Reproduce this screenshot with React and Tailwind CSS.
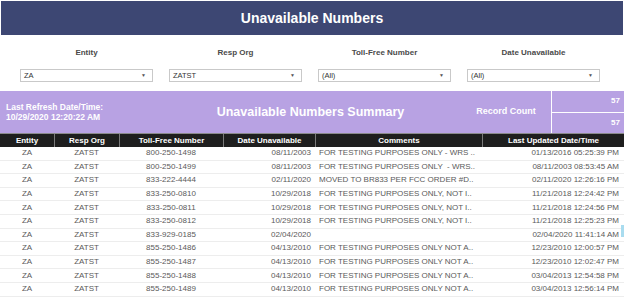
import React from 'react';

const filters = [
    { label: 'Entity', value: 'ZA' },
    { label: 'Resp Org', value: 'ZATST' },
    { label: 'Toll-Free Number', value: '(All)' },
    { label: 'Date Unavailable', value: '(All)' },
];

const columns = ['Entity', 'Resp Org', 'Toll-Free Number', 'Date Unavailable', 'Comments', 'Last Updated Date/Time'];

const rows = [
    ['ZA', 'ZATST', '800-250-1498', '08/11/2003', 'FOR TESTING PURPOSES ONLY - WRS ..', '01/13/2016 05:25:39 PM'],
    ['ZA', 'ZATST', '800-250-1499', '08/11/2003', 'FOR TESTING PURPOSES ONLY  - WRS..', '08/11/2003 08:53:45 AM'],
    ['ZA', 'ZATST', '833-222-4444', '02/11/2020', 'MOVED TO BR833 PER FCC ORDER #D..', '02/11/2020 12:26:16 PM'],
    ['ZA', 'ZATST', '833-250-0810', '10/29/2018', 'FOR TESTING PURPOSES ONLY, NOT I..', '11/21/2018 12:24:42 PM'],
    ['ZA', 'ZATST', '833-250-0811', '10/29/2018', 'FOR TESTING PURPOSES ONLY, NOT I..', '11/21/2018 12:24:56 PM'],
    ['ZA', 'ZATST', '833-250-0812', '10/29/2018', 'FOR TESTING PURPOSES ONLY, NOT I..', '11/21/2018 12:25:23 PM'],
    ['ZA', 'ZATST', '833-929-0185', '02/04/2020', '', '02/04/2020 11:41:14 AM'],
    ['ZA', 'ZATST', '855-250-1486', '04/13/2010', 'FOR TESTING PURPOSES ONLY NOT A..', '12/23/2010 12:00:57 PM'],
    ['ZA', 'ZATST', '855-250-1487', '04/13/2010', 'FOR TESTING PURPOSES ONLY NOT A..', '12/23/2010 12:02:47 PM'],
    ['ZA', 'ZATST', '855-250-1488', '04/13/2010', 'FOR TESTING PURPOSES ONLY NOT A..', '03/04/2013 12:54:58 PM'],
    ['ZA', 'ZATST', '855-250-1489', '04/13/2010', 'FOR TESTING PURPOSES ONLY NOT A..', '03/04/2013 12:56:14 PM'],
];

const cellAlign = [
    'justify-center',
    'justify-center',
    'justify-center',
    'justify-end pr-[4px]',
    'justify-start pl-[4px]',
    'justify-end pr-[5px]',
];

const App = () => {
    return (
        <div className="w-[624px] h-[297px] bg-white overflow-hidden relative font-['Liberation_Sans',Arial,sans-serif]">
            {/* title bar */}
            <div className="mx-[1px] mt-[1px] h-[34px] bg-[#3d4773] flex items-center justify-center">
                <h1 className="text-white font-bold text-[14px]">Unavailable Numbers</h1>
            </div>

            {/* filters */}
            <div className="h-[56px] pl-[20px] pt-[13px] grid grid-cols-[133px_133px_133px_133px] gap-x-[16px]">
                {filters.map(f => (
                    <div key={f.label} className="flex flex-col items-center">
                        <span className="text-[8px] leading-[10px] font-bold text-[#4a4a4a]">{f.label}</span>
                        <div className="mt-[11px] w-full h-[13px] border border-[#c9c9c9] flex items-center justify-between pl-[3px] pr-[6px]">
                            <span className="text-[7.5px] text-[#333]">{f.value}</span>
                            <span className="text-[5px] text-[#555]">▼</span>
                        </div>
                    </div>
                ))}
            </div>

            {/* summary band */}
            <div className="h-[42px] bg-[#b8a2e3] flex text-white font-bold">
                <div className="w-[160px] pl-[6px] flex flex-col justify-center text-[8.5px] leading-[10px]">
                    <span>Last Refresh Date/Time:</span>
                    <span>10/29/2020 12:20:22 AM</span>
                </div>
                <div className="flex-1 flex items-center justify-center text-[12.5px]">Unavailable Numbers Summary</div>
                <div className="w-[90px] flex items-center justify-center text-[9px]">Record Count</div>
                <div className="w-[73px] border-l border-white flex flex-col text-[8px]">
                    <div className="flex-1 border-b border-white flex items-center justify-end pr-[4px]">57</div>
                    <div className="flex-1 flex items-center justify-end pr-[4px]">57</div>
                </div>
            </div>

            {/* table */}
            <div className="relative">
                <div className="grid grid-cols-[54px_65px_104px_92px_167px_142px] h-[14px] bg-[#1e1e1e] border-t border-[#8a8a8a]">
                    {columns.map((c, i) => (
                        <div key={c} className={`flex items-center justify-center text-white font-bold text-[8px] ${i > 0 ? 'border-l border-[#7a7a7a]' : ''}`}>
                            {c}
                        </div>
                    ))}
                </div>
                {rows.map((r, ri) => (
                    <div key={ri} className="grid grid-cols-[54px_65px_104px_92px_167px_142px] h-[13.6px] border-b border-[#ededed]">
                        {r.map((v, ci) => (
                            <div key={ci} className={`flex items-center whitespace-pre overflow-hidden text-[8px] text-[#5a5a5a] ${cellAlign[ci]}`}>
                                {v}
                            </div>
                        ))}
                    </div>
                ))}
                <div className="absolute right-0 top-[92px] w-[3px] h-[12px] bg-[#a9dcef]"></div>
            </div>
        </div>
    );
};

export default App;
